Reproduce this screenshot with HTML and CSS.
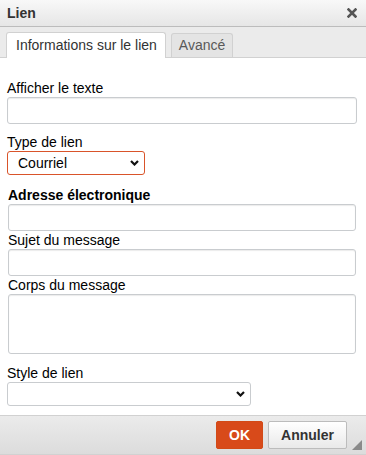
FILE: index.html
```html
<!DOCTYPE html>
<html lang="fr">
<head>
    <meta charset="UTF-8">
    <meta name="viewport" content="width=device-width, initial-scale=1.0">
    <title>Lien</title>
    <link rel="stylesheet" href="styles.css">
</head>
<body>
    <div class="dialog">
        <div class="titlebar">
            <span class="title">Lien</span>
            <span class="close">
                <svg width="10" height="10" viewBox="0 0 10 10">
                    <path d="M1.5 1.5 L8.5 8.5 M8.5 1.5 L1.5 8.5" stroke="#555" stroke-width="2.6" stroke-linecap="square"/>
                </svg>
            </span>
        </div>

        <div class="tabs">
            <span class="tab active">Informations sur le lien</span>
            <span class="tab">Avancé</span>
        </div>

        <div class="contents">
            <label class="field-label first" for="displayText">Afficher le texte</label>
            <input class="text-input" type="text" id="displayText">

            <label class="field-label gap-lg" for="linkType">Type de lien</label>
            <div class="select-wrap short">
                <select class="select focused" id="linkType">
                    <option>Courriel</option>
                    <option>URL</option>
                    <option>Ancre dans la page</option>
                </select>
                <svg class="chevron" width="9" height="6" viewBox="0 0 9 6">
                    <path d="M1 1 L4.5 4.5 L8 1" stroke="#111" stroke-width="2.2" fill="none"/>
                </svg>
            </div>

            <div class="email-group">
                <label class="field-label strong" for="emailAddress">Adresse électronique</label>
                <input class="text-input" type="text" id="emailAddress">

                <label class="field-label gap-sm" for="emailSubject">Sujet du message</label>
                <input class="text-input" type="text" id="emailSubject">

                <label class="field-label gap-sm" for="emailBody">Corps du message</label>
                <textarea class="text-area" id="emailBody"></textarea>
            </div>

            <label class="field-label gap-md" for="linkStyle">Style de lien</label>
            <div class="select-wrap wide">
                <select class="select" id="linkStyle">
                    <option></option>
                </select>
                <svg class="chevron" width="9" height="6" viewBox="0 0 9 6">
                    <path d="M1 1 L4.5 4.5 L8 1" stroke="#111" stroke-width="2.2" fill="none"/>
                </svg>
            </div>
        </div>

        <div class="footer">
            <button class="btn btn-ok">OK</button>
            <button class="btn btn-cancel">Annuler</button>
            <span class="grip"></span>
        </div>
    </div>
</body>
</html>
```

FILE: styles.css
```css
body {
    margin: 0;
    font-family: "Liberation Sans", Arial, sans-serif;
    font-size: 14px;
    color: #000;
    background: #fff;
}
.dialog {
    width: 366px;
    height: 455px;
    display: flex;
    flex-direction: column;
    overflow: hidden;
}
.titlebar {
    height: 26px;
    border-bottom: 1px solid #bcbcbc;
    background: linear-gradient(to bottom, #f8f8f8, #e6e6e6);
    display: flex;
    align-items: center;
    justify-content: space-between;
    padding: 0 9px 0 7px;
    flex-shrink: 0;
}
.title {
    font-weight: bold;
    color: #333;
    line-height: 26px;
}
.close {
    display: flex;
    margin-top: -1px;
}
.tabs {
    height: 30px;
    border-bottom: 1px solid #d1d1d1;
    background: #ebebeb;
    display: flex;
    align-items: flex-end;
    gap: 5px;
    padding-left: 6px;
    flex-shrink: 0;
}
.tab {
    box-sizing: border-box;
    height: 24px;
    line-height: 22px;
    padding: 0 7px;
    border: 1px solid #d1d1d1;
    border-bottom: none;
    border-radius: 3px 3px 0 0;
    background: #e4e4e4;
    color: #595959;
}
.tab.active {
    height: 26px;
    line-height: 24px;
    margin-bottom: -1px;
    padding: 0 8px 0 9px;
    background: #fff;
    color: #333;
}
.contents {
    flex: 1;
    padding: 22px 9px 0 7px;
    display: flex;
    flex-direction: column;
    align-items: flex-start;
}
.field-label {
    display: block;
    line-height: 16px;
    margin-bottom: 1px;
}
.field-label.strong {
    font-weight: bold;
}
.gap-lg {
    margin-top: 10px;
}
.gap-md {
    margin-top: 11px;
}
.gap-sm {
    margin-top: 1px;
}
.text-input, .text-area {
    box-sizing: border-box;
    width: 100%;
    height: 27px;
    border: 1px solid #c9cccf;
    border-radius: 3px;
    box-shadow: inset 0 1px 1px rgba(0,0,0,0.08);
    background: #fff;
    margin: 0;
    font: inherit;
}
.text-area {
    height: 60px;
    resize: none;
}
.email-group {
    align-self: stretch;
    margin-top: 12px;
    padding: 0 1px;
    display: flex;
    flex-direction: column;
}
.select-wrap {
    position: relative;
    box-sizing: border-box;
}
.select-wrap.short {
    width: 138px;
}
.select-wrap.wide {
    width: 244px;
}
.select {
    -webkit-appearance: none;
    appearance: none;
    box-sizing: border-box;
    width: 100%;
    height: 24px;
    border: 1px solid #c9cccf;
    border-radius: 3px;
    background: #fff;
    padding: 0 20px 0 10px;
    font: inherit;
    color: #000;
    margin: 0;
    display: block;
}
.select.focused {
    border-color: #d9542a;
}
.chevron {
    position: absolute;
    right: 6px;
    top: 9px;
    pointer-events: none;
}
.footer {
    position: relative;
    box-sizing: border-box;
    height: 40px;
    border-top: 1px solid #d1d1d1;
    border-bottom: 1px solid #d1d1d1;
    background: linear-gradient(to bottom, #ebebeb, #dcdcdc);
    display: flex;
    justify-content: flex-end;
    align-items: flex-start;
    gap: 5px;
    padding: 5px 19px 0 0;
    flex-shrink: 0;
}
.btn {
    box-sizing: border-box;
    height: 28px;
    border-radius: 2px;
    font-family: inherit;
    font-size: 14px;
    font-weight: bold;
    cursor: pointer;
    padding: 0;
}
.btn-ok {
    width: 47px;
    border: 1px solid #d24a17;
    background: #d84a1a;
    color: #fff;
}
.btn-cancel {
    width: 79px;
    border: 1px solid #bcbcbc;
    background: linear-gradient(to bottom, #ffffff, #e9e9e9);
    color: #333;
}
.grip {
    position: absolute;
    right: 4px;
    bottom: 4px;
    width: 0;
    height: 0;
    border-left: 10px solid transparent;
    border-bottom: 10px solid #8a8a8a;
}
```
